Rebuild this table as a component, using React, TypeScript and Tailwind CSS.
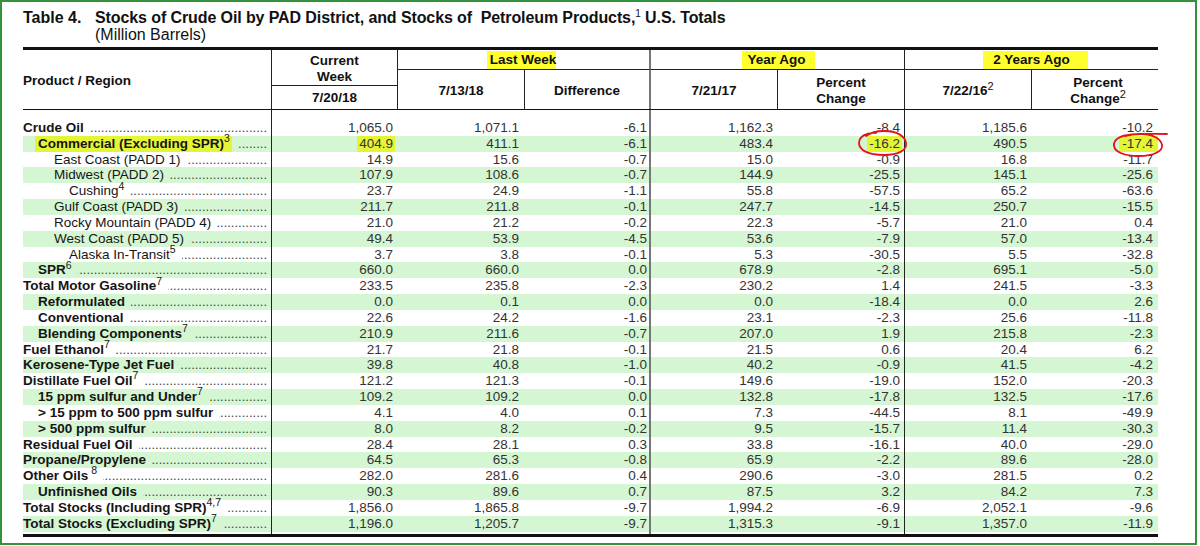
import React from 'react';

type Row = { l: string; sup?: string; ind: number; b: boolean; v: string[] };

const rows: Row[] = [
    { l: 'Crude Oil', ind: 0, b: true, v: ['1,065.0', '1,071.1', '-6.1', '1,162.3', '-8.4', '1,185.6', '-10.2'] },
    { l: 'Commercial (Excluding SPR)', sup: '3', ind: 1, b: true, v: ['404.9', '411.1', '-6.1', '483.4', '-16.2', '490.5', '-17.4'] },
    { l: 'East Coast (PADD 1)', ind: 2, b: false, v: ['14.9', '15.6', '-0.7', '15.0', '-0.9', '16.8', '-11.7'] },
    { l: 'Midwest (PADD 2)', ind: 2, b: false, v: ['107.9', '108.6', '-0.7', '144.9', '-25.5', '145.1', '-25.6'] },
    { l: 'Cushing', sup: '4', ind: 3, b: false, v: ['23.7', '24.9', '-1.1', '55.8', '-57.5', '65.2', '-63.6'] },
    { l: 'Gulf Coast (PADD 3)', ind: 2, b: false, v: ['211.7', '211.8', '-0.1', '247.7', '-14.5', '250.7', '-15.5'] },
    { l: 'Rocky Mountain (PADD 4)', ind: 2, b: false, v: ['21.0', '21.2', '-0.2', '22.3', '-5.7', '21.0', '0.4'] },
    { l: 'West Coast (PADD 5)', ind: 2, b: false, v: ['49.4', '53.9', '-4.5', '53.6', '-7.9', '57.0', '-13.4'] },
    { l: 'Alaska In-Transit', sup: '5', ind: 3, b: false, v: ['3.7', '3.8', '-0.1', '5.3', '-30.5', '5.5', '-32.8'] },
    { l: 'SPR', sup: '6', ind: 1, b: true, v: ['660.0', '660.0', '0.0', '678.9', '-2.8', '695.1', '-5.0'] },
    { l: 'Total Motor Gasoline', sup: '7', ind: 0, b: true, v: ['233.5', '235.8', '-2.3', '230.2', '1.4', '241.5', '-3.3'] },
    { l: 'Reformulated', ind: 1, b: true, v: ['0.0', '0.1', '0.0', '0.0', '-18.4', '0.0', '2.6'] },
    { l: 'Conventional', ind: 1, b: true, v: ['22.6', '24.2', '-1.6', '23.1', '-2.3', '25.6', '-11.8'] },
    { l: 'Blending Components', sup: '7', ind: 1, b: true, v: ['210.9', '211.6', '-0.7', '207.0', '1.9', '215.8', '-2.3'] },
    { l: 'Fuel Ethanol', sup: '7', ind: 0, b: true, v: ['21.7', '21.8', '-0.1', '21.5', '0.6', '20.4', '6.2'] },
    { l: 'Kerosene-Type Jet Fuel', ind: 0, b: true, v: ['39.8', '40.8', '-1.0', '40.2', '-0.9', '41.5', '-4.2'] },
    { l: 'Distillate Fuel Oil', sup: '7', ind: 0, b: true, v: ['121.2', '121.3', '-0.1', '149.6', '-19.0', '152.0', '-20.3'] },
    { l: '15 ppm sulfur and Under', sup: '7', ind: 1, b: true, v: ['109.2', '109.2', '0.0', '132.8', '-17.8', '132.5', '-17.6'] },
    { l: '> 15 ppm to 500 ppm sulfur', ind: 1, b: true, v: ['4.1', '4.0', '0.1', '7.3', '-44.5', '8.1', '-49.9'] },
    { l: '> 500 ppm sulfur', ind: 1, b: true, v: ['8.0', '8.2', '-0.2', '9.5', '-15.7', '11.4', '-30.3'] },
    { l: 'Residual Fuel Oil', ind: 0, b: true, v: ['28.4', '28.1', '0.3', '33.8', '-16.1', '40.0', '-29.0'] },
    { l: 'Propane/Propylene', ind: 0, b: true, v: ['64.5', '65.3', '-0.8', '65.9', '-2.2', '89.6', '-28.0'] },
    { l: 'Other Oils', sup: ' 8', ind: 0, b: true, v: ['282.0', '281.6', '0.4', '290.6', '-3.0', '281.5', '0.2'] },
    { l: 'Unfinished Oils', ind: 1, b: true, v: ['90.3', '89.6', '0.7', '87.5', '3.2', '84.2', '7.3'] },
    { l: 'Total Stocks (Including SPR)', sup: '4,7', ind: 0, b: true, v: ['1,856.0', '1,865.8', '-9.7', '1,994.2', '-6.9', '2,052.1', '-9.6'] },
    { l: 'Total Stocks (Excluding SPR)', sup: '7', ind: 0, b: true, v: ['1,196.0', '1,205.7', '-9.7', '1,315.3', '-9.1', '1,357.0', '-11.9'] },
];

const COLS = 'grid-cols-[249px_126px_127px_126px_127px_127px_127px_126px]';
const indents = ['pl-0', 'pl-[15px]', 'pl-[31px]', 'pl-[46px]'];
// right padding + borders for the 7 value columns (data area)
const valCls = [
    'pr-[5px]',
    'pr-[6px]',
    'pr-[2px] border-r-2 border-[#777]',
    'pr-[5px]',
    'pr-[4px] border-r border-[#222]',
    'pr-[5px]',
    'pr-[5px]',
];
const DOTS = '.'.repeat(80);

function Header() {
    return (
        <div className={`grid ${COLS} grid-rows-[20px_39px] border-t-[3px] border-b border-[#111] text-[13.5px] font-bold text-[#111] leading-[16px]`}>
            <div className="row-span-2 border-r border-[#222] flex items-center pt-[2px]">Product / Region</div>
            <div className="row-span-2 border-r border-[#222] flex flex-col">
                <div className="flex-1 flex items-center justify-center text-center border-b border-[#222] pt-[3px]">
                    <span>Current<br />Week</span>
                </div>
                <div className="h-[23px] flex items-center justify-center pt-[1px]">7/20/18</div>
            </div>
            <div className="col-span-2 border-b border-[#222] border-r-2 border-r-[#777] flex items-end justify-center">
                <span className="bg-[#ffff30] pl-[3px] pr-0 leading-[18px] -translate-x-[2px]">Last Week</span>
            </div>
            <div className="col-span-2 border-b border-[#222] border-r border-r-[#222] flex items-end justify-center">
                <span className="bg-[#ffff30] pl-[5px] pr-[9px] leading-[18px] translate-x-[1px]">Year Ago</span>
            </div>
            <div className="col-span-2 border-b border-[#222] flex items-end justify-center">
                <span className="bg-[#ffff30] pl-[10px] pr-[18px] leading-[18px] translate-x-[4px]">2 Years Ago</span>
            </div>
            <div className="border-r border-[#222] flex items-center justify-center pt-[2px]">7/13/18</div>
            <div className="border-r-2 border-[#777] flex items-center justify-center pt-[2px]">Difference</div>
            <div className="border-r border-[#222] flex items-center justify-center pt-[2px]">7/21/17</div>
            <div className="border-r border-[#222] flex items-center justify-center text-center pt-[3px]">
                <span>Percent<br />Change</span>
            </div>
            <div className="border-r border-[#222] flex items-center justify-center pt-[2px]">
                <span>7/22/16<sup className="text-[11px] font-normal top-[-0.45em]">2</sup></span>
            </div>
            <div className="flex items-center justify-center text-center pt-[3px]">
                <span className="pl-[6px]">Percent<br />Change<sup className="text-[11px] font-normal top-[-0.45em]">2</sup></span>
            </div>
        </div>
    );
}

function DataRow({ r, i }: { r: Row; i: number }) {
    const hl = i === 1;
    const bg = i % 2 === 1 ? 'bg-[#d5f6d2]' : 'bg-white';
    const label = (
        <>
            {r.l}
            {r.sup && <sup className="text-[10.5px] font-normal top-[-0.55em]">{r.sup}</sup>}
        </>
    );
    return (
        <div className={`grid ${COLS} h-[15.84px] ${bg}`}>
            <div className={`flex items-center border-r border-[#222] pr-[4px] ${indents[r.ind]} text-[13.5px] text-[#151515] whitespace-nowrap ${r.b ? 'font-bold' : 'font-normal'}`}>
                {hl
                    ? <span className="bg-[#e3f536] -ml-[3px] pl-[3px] pr-[2px] leading-[16px]">{label}</span>
                    : <span className="leading-[16px]">{label}</span>}
                <span className="flex-1 min-w-0 ml-[6px] flex justify-end overflow-hidden text-[13px] font-normal text-[#444] leading-[16px]">
                    <span className="whitespace-nowrap">{DOTS}</span>
                </span>
            </div>
            {r.v.map((v, k) => (
                <div key={k} className={`flex items-center justify-end text-[13.5px] text-[#333] leading-[16px] ${valCls[k]}`}>
                    {hl && (k === 0 || k === 4 || k === 6)
                        ? <span className={`bg-[#e3f536] ${k === 6 ? 'pl-[3px] pr-[5px] -mr-[5px]' : 'px-[2px] -mr-[2px]'}`}>{v}</span>
                        : v}
                </div>
            ))}
        </div>
    );
}

function Spacer({ h }: { h: string }) {
    return (
        <div className={`grid ${COLS} ${h}`}>
            <div className="border-r border-[#222]" />
            <div />
            <div />
            <div className="border-r-2 border-[#777]" />
            <div />
            <div className="border-r border-[#222]" />
            <div />
            <div />
        </div>
    );
}

export default function App() {
    return (
        <div className="relative w-[1197px] h-[545px] border-2 border-[#36923a] bg-white pl-[21px] pt-[7px] font-['Liberation_Sans',Arial,sans-serif] overflow-hidden">
            <div className="text-[16px] leading-[17px] text-[#111]">
                <div className="flex font-bold">
                    <span className="w-[72px]">Table 4.</span>
                    <span className="tracking-[-0.1px]">Stocks of Crude Oil by PAD District, and Stocks of&nbsp; Petroleum Products,<sup className="text-[10px] font-normal top-[-0.6em]">1</sup> U.S. Totals</span>
                </div>
                <div className="pl-[72px]">(Million Barrels)</div>
            </div>

            <div className="w-[1135px] mt-[4px]">
                <Header />
                <Spacer h="h-[10px]" />
                <div className="border-b-[3px] border-[#111]">
                    {rows.map((r, i) => <DataRow key={i} r={r} i={i} />)}
                    <Spacer h="h-[2px]" />
                </div>
            </div>

            {/* hand-drawn red circles */}
            <svg className="absolute left-0 top-0 pointer-events-none" width="1200" height="546" viewBox="0 0 1200 546">
                <g transform="translate(-2 -2)" fill="none" stroke="#e0141a" strokeWidth="1.8" strokeLinecap="round">
                    <path d="M876 133 C866 132 859 137 859 143 C859 150 868 155 884 155 C899 155 907 150 906 143 C905 136 897 131 884 131 C876 131 870 133 866 136" />
                    <path d="M1131 135 C1120 135 1113 140 1114 146 C1115 152 1124 156 1139 156 C1154 156 1163 151 1162 145 C1161 139 1153 134 1141 134 C1135 134 1130 134 1126 136 M1128 135 C1140 133 1152 134 1167 134" />
                </g>
            </svg>
        </div>
    );
}
